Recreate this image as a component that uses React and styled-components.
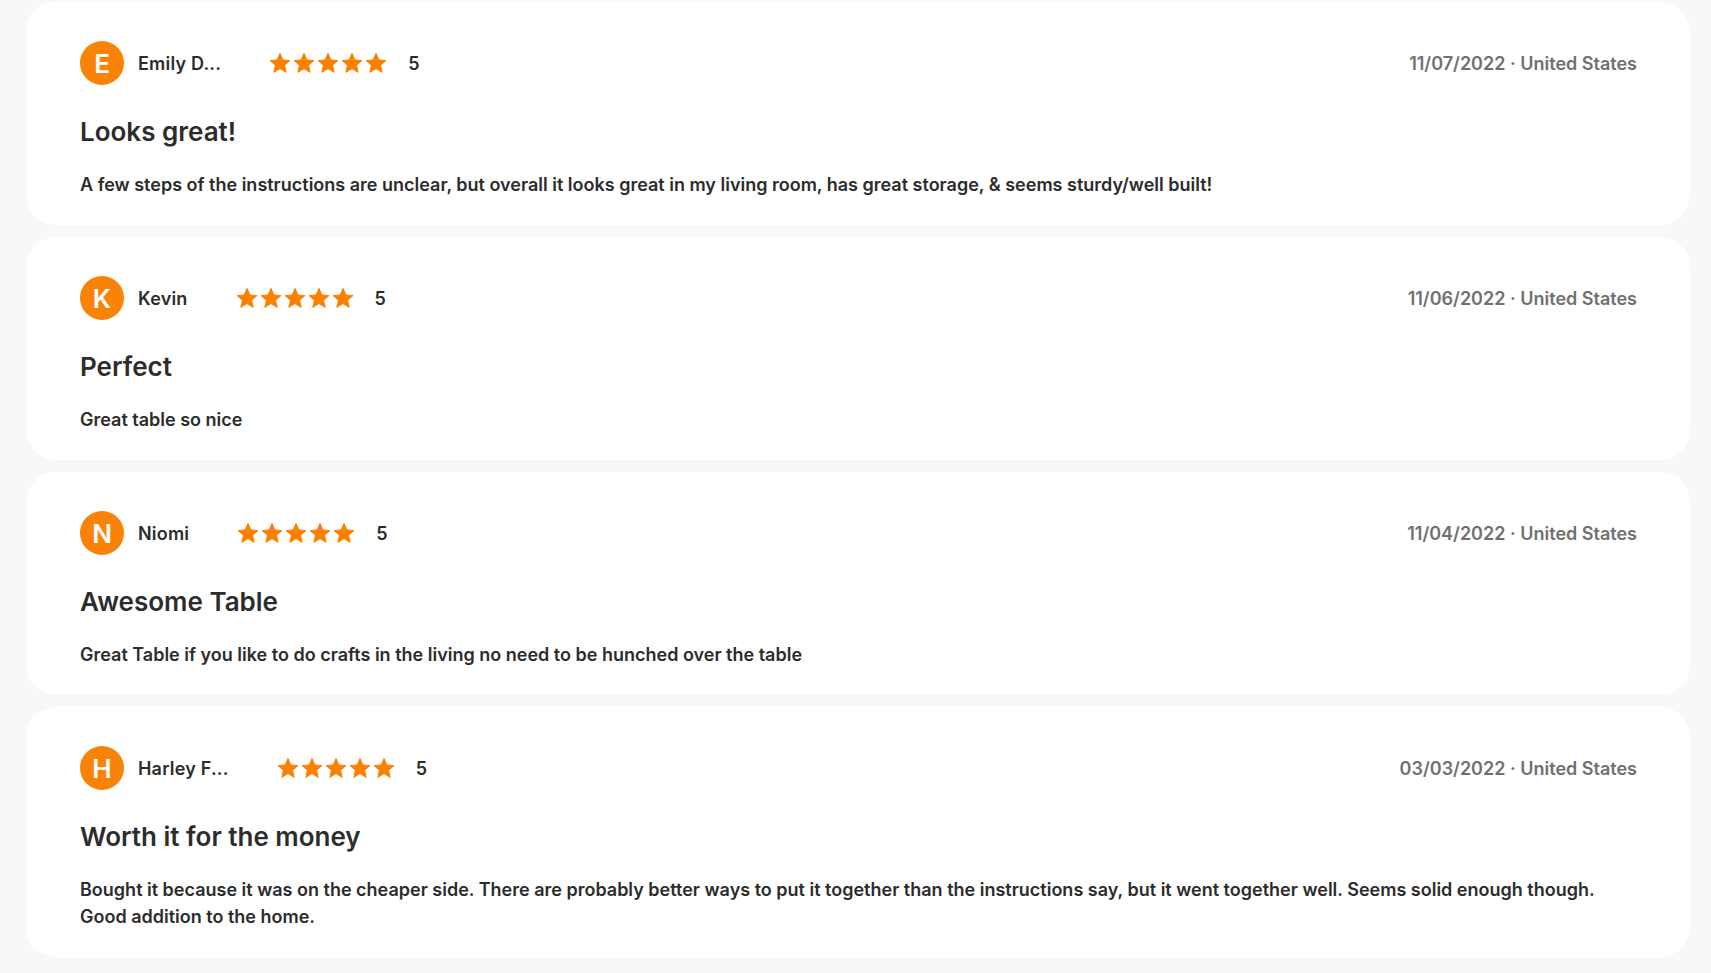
import React from "react";
import styled, { createGlobalStyle } from "styled-components";

const Global = createGlobalStyle`
  html, body { margin: 0; padding: 0; background: #f8f8f8; }
  body { font-family: Inter, "Noto Sans", sans-serif; color: #2c2c2c; }
  * { box-sizing: border-box; }
`;

const Page = styled.div`
  display: flex;
  flex-direction: column;
  gap: 12px;
  padding: 2px 21px 16px 26px;
`;

const Card = styled.article`
  background: #ffffff;
  border-radius: 30px;
  padding: 39px 53px 27px 54px;
`;

const Header = styled.div`
  display: flex;
  align-items: center;
  justify-content: space-between;
  height: 44px;
`;

const Author = styled.div`
  display: flex;
  align-items: center;
`;

const Avatar = styled.div`
  width: 44px;
  height: 44px;
  border-radius: 50%;
  background: #f98307;
  color: #fff;
  display: flex;
  align-items: center;
  justify-content: center;
  font-size: 26px;
  font-weight: 600;
  margin-right: 14px;
`;

const Name = styled.span`
  font-size: 18px;
  font-weight: 600;
  letter-spacing: 0.2px;
  color: #2c2c2c;
  margin-right: 49px;
`;

const Stars = styled.div`
  display: flex;
  align-items: center;
  gap: 4px;
  margin-right: 22px;
`;

const Score = styled.span`
  font-size: 18px;
  font-weight: 600;
  color: #2c2c2c;
`;

const Meta = styled.span`
  font-size: 18px;
  font-weight: 600;
  color: #707070;
`;

const Title = styled.h3`
  margin: 30px 0 0;
  font-size: 26px;
  line-height: 34px;
  font-weight: 600;
  color: #2c2c2c;
`;

const Body = styled.p`
  margin: 22px 0 0;
  font-size: 18px;
  line-height: 27px;
  font-weight: 600;
  color: #2c2c2c;
`;

const Star = () => (
  <svg width="20" height="20" viewBox="2 2 20 19.3" fill="#fb8000">
    <path d="M12 17.27L18.18 21l-1.64-7.03L22 9.24l-7.19-.61L12 2 9.19 8.63 2 9.24l5.46 4.73L5.82 21z" strokeLinejoin="round" stroke="#fb8000" strokeWidth="1" />
  </svg>
);

const reviews = [
  {
    initial: "E",
    name: "Emily D...",
    date: "11/07/2022",
    title: "Looks great!",
    body: "A few steps of the instructions are unclear, but overall it looks great in my living room, has great storage, & seems sturdy/well built!",
  },
  {
    initial: "K",
    name: "Kevin",
    date: "11/06/2022",
    title: "Perfect",
    body: "Great table so nice",
  },
  {
    initial: "N",
    name: "Niomi",
    date: "11/04/2022",
    title: "Awesome Table",
    body: "Great Table if you like to do crafts in the living no need to be hunched over the table",
  },
  {
    initial: "H",
    name: "Harley F...",
    date: "03/03/2022",
    title: "Worth it for the money",
    body: "Bought it because it was on the cheaper side. There are probably better ways to put it together than the instructions say, but it went together well. Seems solid enough though. Good addition to the home.",
  },
];

export default function App() {
  return (
    <>
      <Global />
      <Page>
        {reviews.map((r) => (
          <Card key={r.name}>
            <Header>
              <Author>
                <Avatar>{r.initial}</Avatar>
                <Name>{r.name}</Name>
                <Stars>
                  {[0, 1, 2, 3, 4].map((i) => (
                    <Star key={i} />
                  ))}
                </Stars>
                <Score>5</Score>
              </Author>
              <Meta>{r.date} · United States</Meta>
            </Header>
            <Title>{r.title}</Title>
            <Body>{r.body}</Body>
          </Card>
        ))}
      </Page>
    </>
  );
}
